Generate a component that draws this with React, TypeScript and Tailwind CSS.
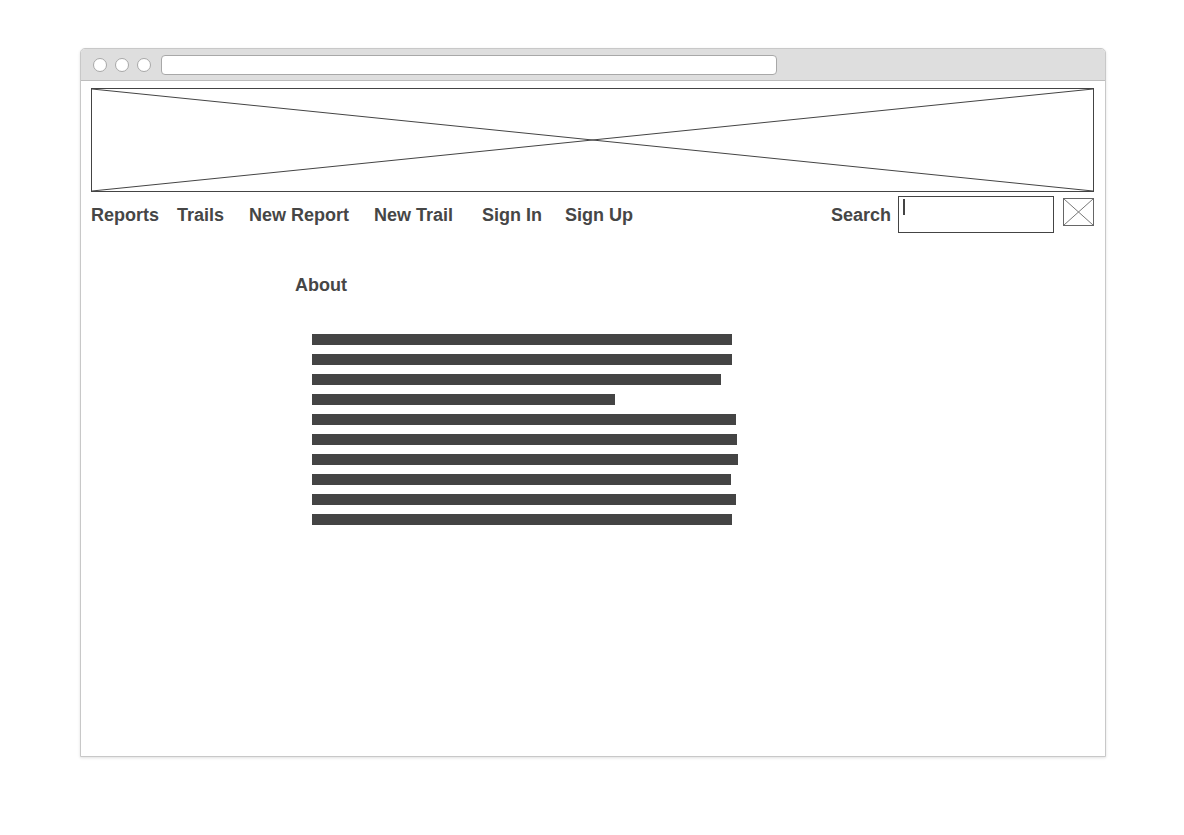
import React from "react";

const bars = [420, 420, 409, 303, 424, 425, 426, 419, 424, 420];

export default function App() {
  const font = { fontFamily: '"Liberation Sans", Arial, sans-serif' };
  return (
    <div className="w-full h-[835px] bg-white pt-[48px] pl-[80px]" style={font}>
      <div className="w-[1026px] h-[709px] border border-[#c8c8c8] rounded-t-[5px] shadow-[0_1px_3px_rgba(0,0,0,0.12)] bg-white flex flex-col">
        <div className="h-[32px] bg-[#dedede] border-b border-[#bdbdbd] rounded-t-[4px] flex items-center pl-[12px]">
          <div className="w-[14px] h-[14px] rounded-full bg-white border border-[#a8a8a8]" />
          <div className="w-[14px] h-[14px] rounded-full bg-white border border-[#a8a8a8] ml-[8px]" />
          <div className="w-[14px] h-[14px] rounded-full bg-white border border-[#a8a8a8] ml-[8px]" />
          <div className="w-[616px] h-[20px] rounded-[4px] bg-white border border-[#a8a8a8] ml-[10px]" />
        </div>
        <div className="pl-[10px] pt-[7px] w-[1013px]">
          <div className="w-[1003px] h-[104px] border border-[#444] relative">
            <svg className="absolute inset-0 w-full h-full" viewBox="0 0 100 100" preserveAspectRatio="none">
              <line x1="0" y1="0" x2="100" y2="100" stroke="#444" strokeWidth="1" vectorEffect="non-scaling-stroke" />
              <line x1="100" y1="0" x2="0" y2="100" stroke="#444" strokeWidth="1" vectorEffect="non-scaling-stroke" />
            </svg>
          </div>
          <div className="flex items-center h-[37px] mt-[4px] text-[18px] font-bold text-[#464646]">
            <span className="w-[86px] pt-[2px]">Reports</span>
            <span className="w-[72px] pt-[2px]">Trails</span>
            <span className="w-[125px] pt-[2px]">New Report</span>
            <span className="w-[108px] pt-[2px]">New Trail</span>
            <span className="w-[83px] pt-[2px]">Sign In</span>
            <span className="pt-[2px]">Sign Up</span>
            <span className="ml-auto pt-[2px]">Search</span>
            <div className="ml-[7px] w-[156px] h-[37px] border border-[#444] relative">
              <div className="absolute left-[4px] top-[2px] w-[2px] h-[16px] bg-[#444]" />
            </div>
            <div className="ml-[9px] w-[31px] h-[28px] border border-[#666] relative self-start mt-[2px]">
              <svg className="absolute inset-0 w-full h-full" viewBox="0 0 100 100" preserveAspectRatio="none">
                <line x1="0" y1="0" x2="100" y2="100" stroke="#777" strokeWidth="1" vectorEffect="non-scaling-stroke" />
                <line x1="100" y1="0" x2="0" y2="100" stroke="#777" strokeWidth="1" vectorEffect="non-scaling-stroke" />
              </svg>
            </div>
          </div>
          <div className="pl-[204px] mt-[41px] text-[18px] font-bold text-[#464646] leading-[22px]">About</div>
          <div className="pl-[221px] mt-[38px] flex flex-col gap-[9px]">
            {bars.map((w, i) => (
              <div key={i} className="h-[11px] bg-[#444]" style={{ width: w }} />
            ))}
          </div>
        </div>
      </div>
    </div>
  );
}
